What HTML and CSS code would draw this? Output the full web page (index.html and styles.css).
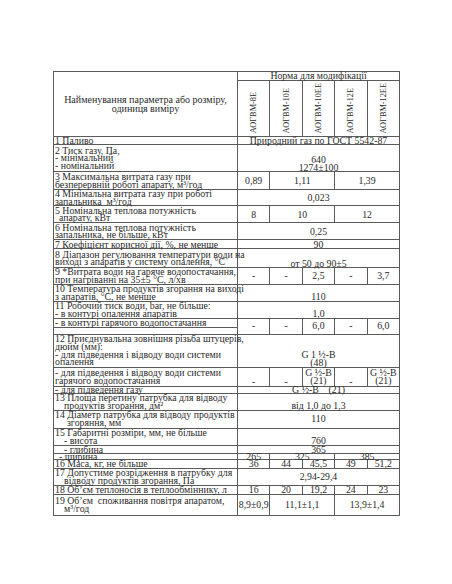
FILE: index.html
```html
<!DOCTYPE html>
<html lang="uk">
<head>
<meta charset="utf-8">
<link rel="stylesheet" href="styles.css">
</head>
<body>
<div class="page">
<table class="spec">
<colgroup>
<col class="c-label"><col class="c-val"><col class="c-val"><col class="c-val"><col class="c-val"><col class="c-val">
</colgroup>
<thead>
<tr class="h1">
<th rowspan="2" class="head-label">Найменування параметра або розміру,<br>одиниця виміру</th>
<th colspan="5">Норма для модифікації</th>
</tr>
<tr class="h2">
<th class="vert"><span>АОГВМ-8Е</span></th>
<th class="vert"><span>АОГВМ-10Е</span></th>
<th class="vert"><span>АОГВМ-10ЕЕ</span></th>
<th class="vert"><span>АОГВМ-12Е</span></th>
<th class="vert"><span>АОГВМ-12ЕЕ</span></th>
</tr>
</thead>
<tbody>
<tr class="h8"><td class="lbl">1 Паливо</td><td colspan="5">Природний газ по ГОСТ 5542-87</td></tr>
<tr class="h27"><td class="lbl">2 Тиск газу, Па,<br>- мінімальний<br>- номінальний</td><td colspan="5" class="b">640<br>1274±100</td></tr>
<tr class="h18"><td class="lbl">3 Максимальна витрата газу при<br>безперервній роботі апарату, м³/год</td><td>0,89</td><td colspan="2">1,11</td><td colspan="2">1,39</td></tr>
<tr class="h16"><td class="lbl">4 Мінімальна витрата газу при роботі<br>запальника&nbsp; м³/год</td><td colspan="5">0,023</td></tr>
<tr class="h17"><td class="lbl">5 Номінальна теплова потужність<br><span class="i1">апарату, кВт</span></td><td>8</td><td colspan="2">10</td><td colspan="2">12</td></tr>
<tr class="h17"><td class="lbl">6 Номінальна теплова потужність<br>запальника, не більше, кВт</td><td colspan="5">0,25</td></tr>
<tr class="h9"><td class="lbl">7 Коефіцієнт корисної дії, %, не менше</td><td colspan="5">90</td></tr>
<tr class="h19"><td class="lbl">8 Діапазон регулювання температури води на<br>виході з апаратів у систему опалення, °С</td><td colspan="5" class="b">от 50 до 90±5</td></tr>
<tr class="h16"><td class="lbl">9 *Витрата води на гаряче водопостачання,<br>при нагріванні на 35±5 °С, л/хв</td><td>-</td><td>-</td><td>2,5</td><td>-</td><td>3,7</td></tr>
<tr class="h17"><td class="lbl">10 Температура продуктів згорання на виході<br>з апаратів, °С, не менше</td><td colspan="5" class="b">110</td></tr>
<tr class="h17"><td class="lbl">11 Робочий тиск води, bar, не більше:<br>- в контурі опалення апаратів</td><td colspan="5" class="b">1,0</td></tr>
<tr class="h9"><td class="lbl">- в контурі гарячого водопостачання</td><td rowspan="2">-</td><td rowspan="2">-</td><td rowspan="2">6,0</td><td rowspan="2">-</td><td rowspan="2">6,0</td></tr>
<tr class="h7 squash"><td class="lbl"></td></tr>
<tr class="h33"><td class="lbl">12 Приєднувальна зовнішня різьба штуцерів,<br>дюйм (мм):<br>- для підведення і відводу води системи<br>опалення</td><td colspan="5" class="b">G 1 ½-B<br>(48)</td></tr>
<tr class="h19"><td class="lbl">- для підведення і відводу води системи<br>гарячого водопостачання</td><td class="b">-</td><td class="b">-</td><td>G ½-B<br>(21)</td><td class="b">-</td><td>G ½-B<br>(21)</td></tr>
<tr class="h7 squash"><td class="lbl">- для підведення газу</td><td colspan="5">G ½-B&nbsp;&nbsp;&nbsp; (21)</td></tr>
<tr class="h17"><td class="lbl">13 Площа перетину патрубка для відводу<br><span class="i2">продуктів згорання, дм²</span></td><td colspan="5" class="b">від 1,0 до 1,3</td></tr>
<tr class="h18"><td class="lbl">14 Діаметр патрубка для відводу продуктів<br><span class="i3">згоряння, мм</span></td><td colspan="5">110</td></tr>
<tr class="h17"><td class="lbl">15 Габаритні розміри, мм, не більше<br><span class="i2">- висота</span></td><td colspan="5" class="b">760</td></tr>
<tr class="h8 squash"><td class="lbl"><span class="i2">- глибина</span></td><td colspan="5">365</td></tr>
<tr class="h6 squash"><td class="lbl"><span class="i1">- ширина</span></td><td>265</td><td colspan="2">325</td><td colspan="2">385</td></tr>
<tr class="h9"><td class="lbl">16 Маса, кг, не більше</td><td>36</td><td>44</td><td>45,5</td><td>49</td><td>51,2</td></tr>
<tr class="h17"><td class="lbl">17 Допустиме розрідження в патрубку для<br><span class="i2">відводу продуктів згорання, Па</span></td><td colspan="5">2,94-29,4</td></tr>
<tr class="h9"><td class="lbl">18 Об’єм теплоносія в теплообміннику, л</td><td>16</td><td>20</td><td>19,2</td><td>24</td><td>23</td></tr>
<tr class="h21"><td class="lbl">19 Об’єм&nbsp; споживання повітря апаратом,<br><span class="i2">м³/год</span></td><td>8,9±0,9</td><td colspan="2">11,1±1,1</td><td colspan="2">13,9±1,4</td></tr>
</tbody>
</table>
</div>
</body>
</html>
```
FILE: styles.css
```css
html, body {
  margin: 0;
  padding: 0;
  background: #ffffff;
}

.page {
  padding: 71px 0 0 53px;
}

.spec {
  border-collapse: collapse;
  table-layout: fixed;
  width: 346px;
  font-family: "Liberation Serif", "Times New Roman", serif;
  font-size: 9.8px;
  line-height: 7.6px;
  color: #2a2a2a;
}

.c-label { width: 184px; }
.c-val { width: 32.4px; }

.spec th,
.spec td {
  border: 1px solid #5a5a5a;
  padding: 0;
  text-align: center;
  vertical-align: middle;
  font-weight: normal;
  white-space: nowrap;
  overflow: visible;
}

.spec td.lbl {
  text-align: left;
  padding-left: 1px;
}

.spec td.b {
  vertical-align: bottom;
}

.head-label {
  font-size: 10px;
  line-height: 9px;
}

.h1 { height: 8px; }
.h2 { height: 56px; }

.spec th.vert {
  vertical-align: bottom;
  padding-bottom: 2px;
}

.vert span {
  display: block;
  width: 9px;
  margin: 0 auto;
  writing-mode: vertical-rl;
  transform: rotate(180deg);
  font-size: 8.3px;
  line-height: 9px;
}

.h6 { height: 6px; }
.h7 { height: 7px; }
.h8 { height: 8px; }
.h9 { height: 9px; }
.h16 { height: 16px; }
.h17 { height: 17px; }
.h18 { height: 18px; }
.h19 { height: 19px; }
.h21 { height: 21px; }
.h27 { height: 27px; }
.h33 { height: 33px; }

.squash td {
  line-height: 5px;
}

.i1 { margin-left: 4px; }
.i2 { margin-left: 9px; }
.i3 { margin-left: 12px; }
```
